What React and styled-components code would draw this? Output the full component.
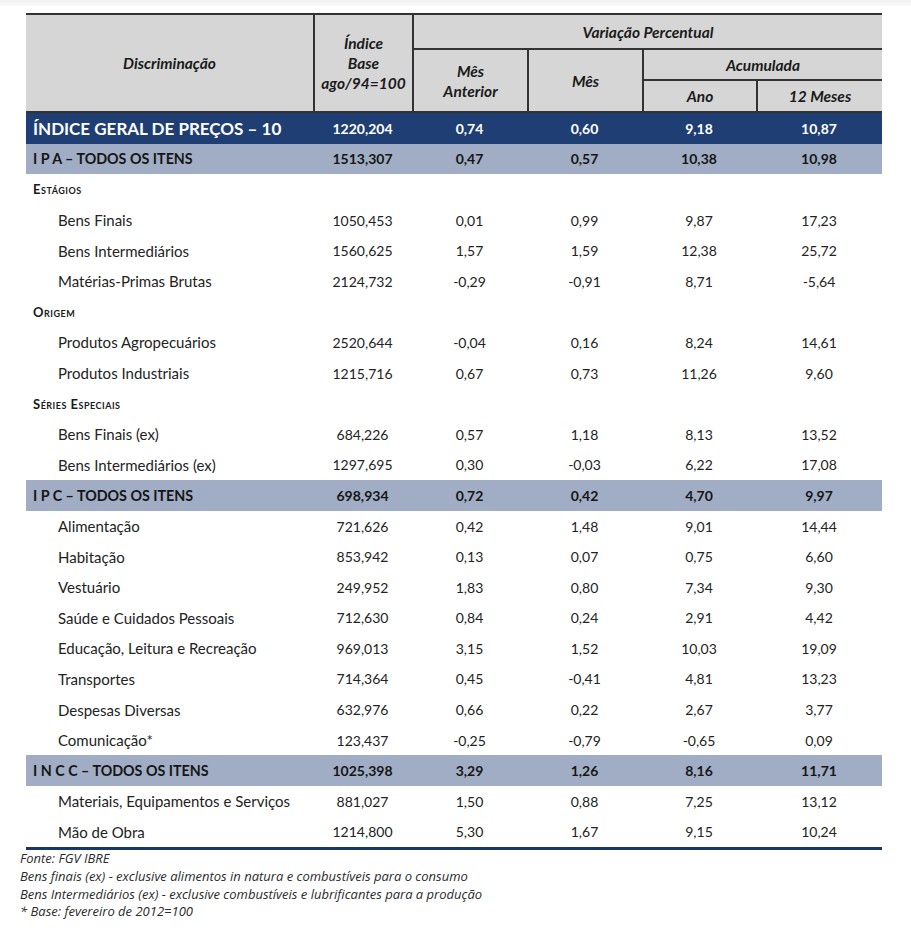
import React from "react";
import styled, { createGlobalStyle, css } from "styled-components";

const GlobalStyle = createGlobalStyle`
    body {
        margin: 0;
        background: #ffffff;
        font-family: Lato, "Open Sans", "Liberation Sans", sans-serif;
        color: #1f1f1f;
    }
`;

const COLS = "287px 99px 115px 115px 114px 126px";

const Page = styled.div`
    width: 911px;
    min-height: 938px;
`;

const TopShade = styled.div`
    height: 6px;
    background: linear-gradient(#f1f1f1, #fafafa);
`;

const Sheet = styled.div`
    width: 856px;
    margin: 7px 0 0 26px;
`;

const Head = styled.div`
    display: grid;
    grid-template-columns: ${COLS};
    grid-template-rows: 35px 31px 30px;
    background: #d6d6d6;
    border-top: 2px solid #333;
    border-bottom: 2px solid #333;
`;

const HeadCell = styled.div`
    display: flex;
    align-items: center;
    justify-content: center;
    text-align: center;
    font-size: 15.5px;
    font-weight: 700;
    font-style: italic;
    line-height: 20px;
    color: #1b1b1b;
    grid-column: ${(p) => p.col};
    grid-row: ${(p) => p.row};
    ${(p) => p.left && css`border-left: 2px solid #333;`}
    ${(p) => p.under && css`border-bottom: 2px solid #333;`}
`;

const Row = styled.div`
    display: grid;
    grid-template-columns: ${COLS};
    height: 30.6px;
    align-items: center;
    font-size: 14px;
    ${(p) => p.kind === "main" && css`
        background: #1f3e74;
        color: #ffffff;
        font-weight: 700;
    `}
    ${(p) => p.kind === "group" && css`
        background: #a0adc4;
        color: #161616;
        font-weight: 700;
    `}
    ${(p) => p.kind === "item" && css`
        color: #232323;
    `}
`;

const Label = styled.div`
    padding-left: ${(p) => (p.indent ? "32px" : "7px")};
    white-space: nowrap;
    font-size: ${(p) => (p.big ? "17px" : p.indent ? "15px" : "14.3px")};
`;

const Section = styled.div`
    padding-left: 7px;
    font-size: 13px;
    font-weight: 700;
    font-variant: small-caps;
    letter-spacing: 0.5px;
    color: #1a1a1a;
`;

const Value = styled.div`
    text-align: center;
`;

const BottomRule = styled.div`
    height: 3px;
    background: #173866;
`;

const Notes = styled.div`
    margin: 0 0 0 -6px;
    font-family: "Open Sans", Lato, sans-serif;
    font-size: 13px;
    font-style: italic;
    line-height: 17.7px;
    letter-spacing: 0;
    color: #2b2b2b;
`;

const rows = [
    { kind: "main", label: "ÍNDICE GERAL DE PREÇOS – 10", v: ["1220,204", "0,74", "0,60", "9,18", "10,87"] },
    { kind: "group", label: "I P A – TODOS OS ITENS", v: ["1513,307", "0,47", "0,57", "10,38", "10,98"] },
    { kind: "section", label: "Estágios" },
    { kind: "item", label: "Bens Finais", v: ["1050,453", "0,01", "0,99", "9,87", "17,23"] },
    { kind: "item", label: "Bens Intermediários", v: ["1560,625", "1,57", "1,59", "12,38", "25,72"] },
    { kind: "item", label: "Matérias-Primas Brutas", v: ["2124,732", "-0,29", "-0,91", "8,71", "-5,64"] },
    { kind: "section", label: "Origem" },
    { kind: "item", label: "Produtos Agropecuários", v: ["2520,644", "-0,04", "0,16", "8,24", "14,61"] },
    { kind: "item", label: "Produtos Industriais", v: ["1215,716", "0,67", "0,73", "11,26", "9,60"] },
    { kind: "section", label: "Séries Especiais" },
    { kind: "item", label: "Bens Finais (ex)", v: ["684,226", "0,57", "1,18", "8,13", "13,52"] },
    { kind: "item", label: "Bens Intermediários (ex)", v: ["1297,695", "0,30", "-0,03", "6,22", "17,08"] },
    { kind: "group", label: "I P C – TODOS OS ITENS", v: ["698,934", "0,72", "0,42", "4,70", "9,97"] },
    { kind: "item", label: "Alimentação", v: ["721,626", "0,42", "1,48", "9,01", "14,44"] },
    { kind: "item", label: "Habitação", v: ["853,942", "0,13", "0,07", "0,75", "6,60"] },
    { kind: "item", label: "Vestuário", v: ["249,952", "1,83", "0,80", "7,34", "9,30"] },
    { kind: "item", label: "Saúde e Cuidados Pessoais", v: ["712,630", "0,84", "0,24", "2,91", "4,42"] },
    { kind: "item", label: "Educação, Leitura e Recreação", v: ["969,013", "3,15", "1,52", "10,03", "19,09"] },
    { kind: "item", label: "Transportes", v: ["714,364", "0,45", "-0,41", "4,81", "13,23"] },
    { kind: "item", label: "Despesas Diversas", v: ["632,976", "0,66", "0,22", "2,67", "3,77"] },
    { kind: "item", label: "Comunicação*", v: ["123,437", "-0,25", "-0,79", "-0,65", "0,09"] },
    { kind: "group", label: "I N C C – TODOS OS ITENS", v: ["1025,398", "3,29", "1,26", "8,16", "11,71"] },
    { kind: "item", label: "Materiais, Equipamentos e Serviços", v: ["881,027", "1,50", "0,88", "7,25", "13,12"] },
    { kind: "item", label: "Mão de Obra", v: ["1214,800", "5,30", "1,67", "9,15", "10,24"] },
];

const notes = [
    "Fonte: FGV IBRE",
    "Bens finais (ex) - exclusive alimentos in natura e combustíveis para o consumo",
    "Bens Intermediários (ex) - exclusive combustíveis e lubrificantes para a produção",
    "* Base: fevereiro de 2012=100",
];

export default function App() {
    return (
        <Page>
            <GlobalStyle />
            <TopShade />
            <Sheet>
                <Head>
                    <HeadCell col="1" row="1 / 4">Discriminação</HeadCell>
                    <HeadCell col="2" row="1 / 4" left>
                        Índice<br />Base<br />ago/94=100
                    </HeadCell>
                    <HeadCell col="3 / 7" row="1" left under>Variação Percentual</HeadCell>
                    <HeadCell col="3" row="2 / 4" left>Mês<br />Anterior</HeadCell>
                    <HeadCell col="4" row="2 / 4" left>Mês</HeadCell>
                    <HeadCell col="5 / 7" row="2" left under>Acumulada</HeadCell>
                    <HeadCell col="5" row="3" left>Ano</HeadCell>
                    <HeadCell col="6" row="3" left>12 Meses</HeadCell>
                </Head>
                {rows.map((r) =>
                    r.kind === "section" ? (
                        <Row key={r.label} kind="section">
                            <Section>{r.label}</Section>
                        </Row>
                    ) : (
                        <Row key={r.label} kind={r.kind}>
                            <Label indent={r.kind === "item"} big={r.kind === "main"}>{r.label}</Label>
                            {r.v.map((x, i) => (
                                <Value key={i}>{x}</Value>
                            ))}
                        </Row>
                    )
                )}
                <BottomRule />
                <Notes>
                    {notes.map((n) => (
                        <div key={n}>{n}</div>
                    ))}
                </Notes>
            </Sheet>
        </Page>
    );
}
